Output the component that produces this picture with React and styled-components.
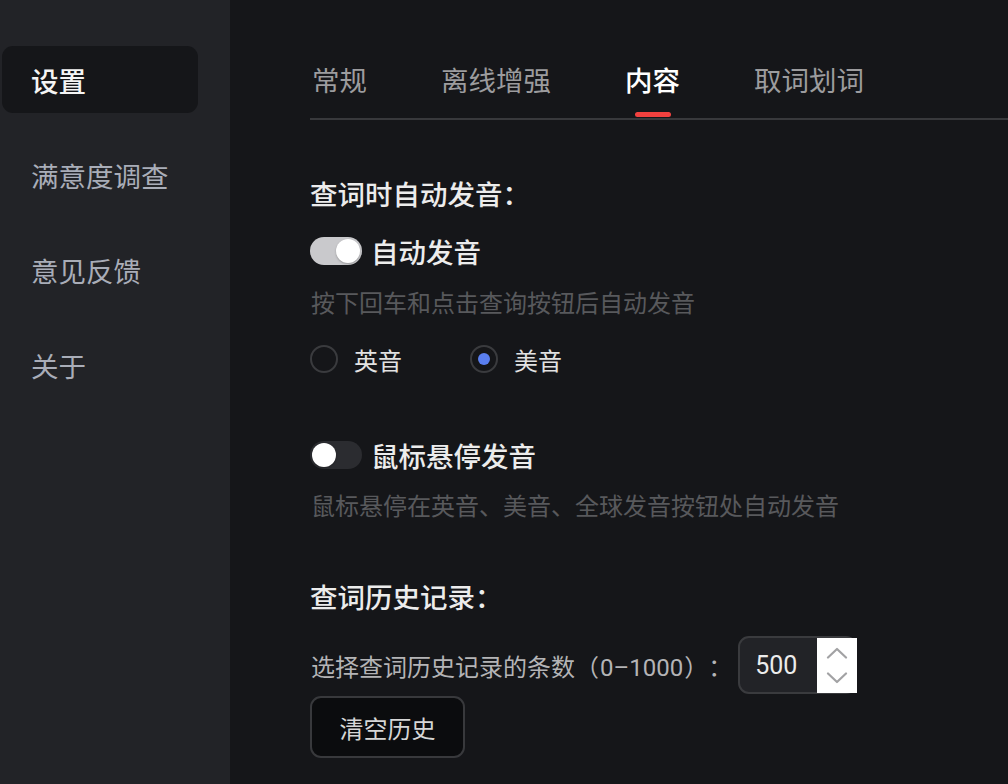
import React, { useState } from "react"
import styled, { createGlobalStyle } from "styled-components"

const Global = createGlobalStyle`
  html, body { margin: 0; padding: 0; background: #151619; }
  body {
    font-family: "Noto Sans CJK SC", "Noto Sans", sans-serif;
    text-spacing-trim: space-all;
  }
  * { box-sizing: border-box; }
`

const Layout = styled.div`
  display: flex;
  width: 1008px;
  height: 784px;
  overflow: hidden;
  background: #151619;
`

const Sidebar = styled.nav`
  width: 230px;
  flex-shrink: 0;
  background: #222327;
  padding: 46px 32px 0 2px;
  display: flex;
  flex-direction: column;
  gap: 28px;
`

const NavItem = styled.div`
  height: 67px;
  border-radius: 11px;
  display: flex;
  align-items: center;
  padding-left: 29px;
  font-size: 27.5px;
  font-weight: ${p => (p.active ? 500 : 400)};
  color: ${p => (p.active ? "#f4f4f4" : "#a9adb8")};
  background: ${p => (p.active ? "#151619" : "transparent")};
`

const Main = styled.main`
  flex: 1;
  padding: 59px 0 0 80px;
  color: #ececec;
`

const TabBar = styled.div`
  display: flex;
  gap: 74px;
  padding-left: 2px;
  border-bottom: 2px solid #38393c;
`

const Tab = styled.div`
  display: flex;
  flex-direction: column;
  align-items: center;
  font-size: 27.5px;
  line-height: 40px;
  font-weight: ${p => (p.active ? 500 : 400)};
  color: ${p => (p.active ? "#ffffff" : "#9c9c9e")};
`

const Indicator = styled.span`
  display: block;
  width: 36px;
  height: 5px;
  margin-top: 13px;
  margin-bottom: 1px;
  border-radius: 3px;
  background: ${p => (p.active ? "#f2413f" : "transparent")};
`

const Title = styled.h3`
  margin: ${p => p.top}px 0 0 0;
  font-size: 27.5px;
  line-height: 36px;
  font-weight: 500;
  color: #ececec;
`

const ToggleRow = styled.label`
  display: flex;
  align-items: center;
  gap: 9px;
  margin-top: ${p => p.top}px;
  height: 28px;
  font-size: 27.5px;
  font-weight: 500;
  color: #ececec;
`

const Track = styled.span`
  width: 52px;
  height: 28px;
  border-radius: 14px;
  padding: 2px;
  display: flex;
  justify-content: ${p => (p.on ? "flex-end" : "flex-start")};
  background: ${p => (p.on ? "#c9c9cc" : "#2b2c30")};
`

const Knob = styled.span`
  width: 24px;
  height: 24px;
  border-radius: 50%;
  background: #ffffff;
  box-shadow: 0 1px 2px rgba(0, 0, 0, 0.25);
`

const Desc = styled.p`
  margin: ${p => p.top}px 0 0 1px;
  font-size: 24px;
  line-height: 34px;
  color: #58595c;
`

const RadioRow = styled.div`
  display: flex;
  margin-top: 25px;
  height: 30px;
  align-items: center;
`

const RadioOption = styled.label`
  display: flex;
  align-items: center;
  gap: 16px;
  width: 160px;
  font-size: 24px;
  color: #e2e2e2;
`

const RadioCircle = styled.span`
  width: 28px;
  height: 28px;
  border-radius: 50%;
  border: 2px solid #3a3b3e;
  display: flex;
  align-items: center;
  justify-content: center;

  &::after {
    content: "";
    width: 12px;
    height: 12px;
    border-radius: 50%;
    background: ${p => (p.checked ? "#5a7ff0" : "transparent")};
  }
`

const InputRow = styled.div`
  display: flex;
  align-items: center;
  margin-top: 22px;
`

const InputLabel = styled.span`
  font-size: 24px;
  color: #b4b4b6;
  margin-left: 1px;
`

const Digits = styled.span`
  font-family: "Roboto", "Noto Sans", sans-serif;
  font-size: 24px;
  padding: 0 1px;
`

const NumberBox = styled.div`
  display: flex;
  align-items: center;
  width: 119px;
  height: 58px;
  margin-left: 6px;
  border: 2px solid #3a3b3e;
  border-radius: 11px;
  background: #222327;
`

const NumberValue = styled.span`
  flex: 1;
  padding-left: 15px;
  font-family: "Roboto", "Noto Sans", sans-serif;
  font-size: 25px;
  color: #ececec;
`

const Spinner = styled.div`
  width: 40px;
  height: 55px;
  margin-right: -2px;
  background: #ffffff;
  display: flex;
  flex-direction: column;
  align-items: center;
  justify-content: center;
  gap: 13px;
`

const ClearButton = styled.button`
  display: block;
  margin-top: 2px;
  width: 155px;
  height: 62px;
  border: 2px solid #38393c;
  border-radius: 11px;
  background: #0b0c0e;
  font-family: "Noto Sans CJK SC", sans-serif;
  font-size: 24px;
  color: #d6d6d6;
`

const Chevron = ({ up }) => (
  <svg width="22" height="12" viewBox="0 0 22 12">
    <path
      d={up ? "M2 10.5 L11 2 L20 10.5" : "M2 1.5 L11 10 L20 1.5"}
      fill="none"
      stroke="#a2a2a4"
      strokeWidth="2.2"
      strokeLinecap="round"
      strokeLinejoin="round"
    />
  </svg>
)

const Toggle = ({ on, label, top }) => (
  <ToggleRow top={top}>
    <Track on={on}>
      <Knob />
    </Track>
    {label}
  </ToggleRow>
)

export default function App() {
  const [tab] = useState("内容")
  const [accent, setAccent] = useState("us")
  const tabs = ["常规", "离线增强", "内容", "取词划词"]
  const nav = ["设置", "满意度调查", "意见反馈", "关于"]

  return (
    <Layout>
      <Global />
      <Sidebar>
        {nav.map((n, i) => (
          <NavItem key={n} active={i === 0}>{n}</NavItem>
        ))}
      </Sidebar>
      <Main>
        <TabBar>
          {tabs.map(t => (
            <Tab key={t} active={t === tab}>
              {t}
              <Indicator active={t === tab} />
            </Tab>
          ))}
        </TabBar>

        <Title top={55}>查词时自动发音：</Title>
        <Toggle on top={26} label="自动发音" />
        <Desc top={20}>按下回车和点击查询按钮后自动发音</Desc>
        <RadioRow>
          <RadioOption onClick={() => setAccent("uk")}>
            <RadioCircle checked={accent === "uk"} />
            英音
          </RadioOption>
          <RadioOption onClick={() => setAccent("us")}>
            <RadioCircle checked={accent === "us"} />
            美音
          </RadioOption>
        </RadioRow>

        <Toggle top={67} label="鼠标悬停发音" />
        <Desc top={19}>鼠标悬停在英音、美音、全球发音按钮处自动发音</Desc>

        <Title top={56}>查词历史记录：</Title>
        <InputRow>
          <InputLabel>
            选择查词历史记录的条数（<Digits>0–1000</Digits>）：
          </InputLabel>
          <NumberBox>
            <NumberValue>500</NumberValue>
            <Spinner>
              <Chevron up />
              <Chevron />
            </Spinner>
          </NumberBox>
        </InputRow>
        <ClearButton>清空历史</ClearButton>
      </Main>
    </Layout>
  )
}
